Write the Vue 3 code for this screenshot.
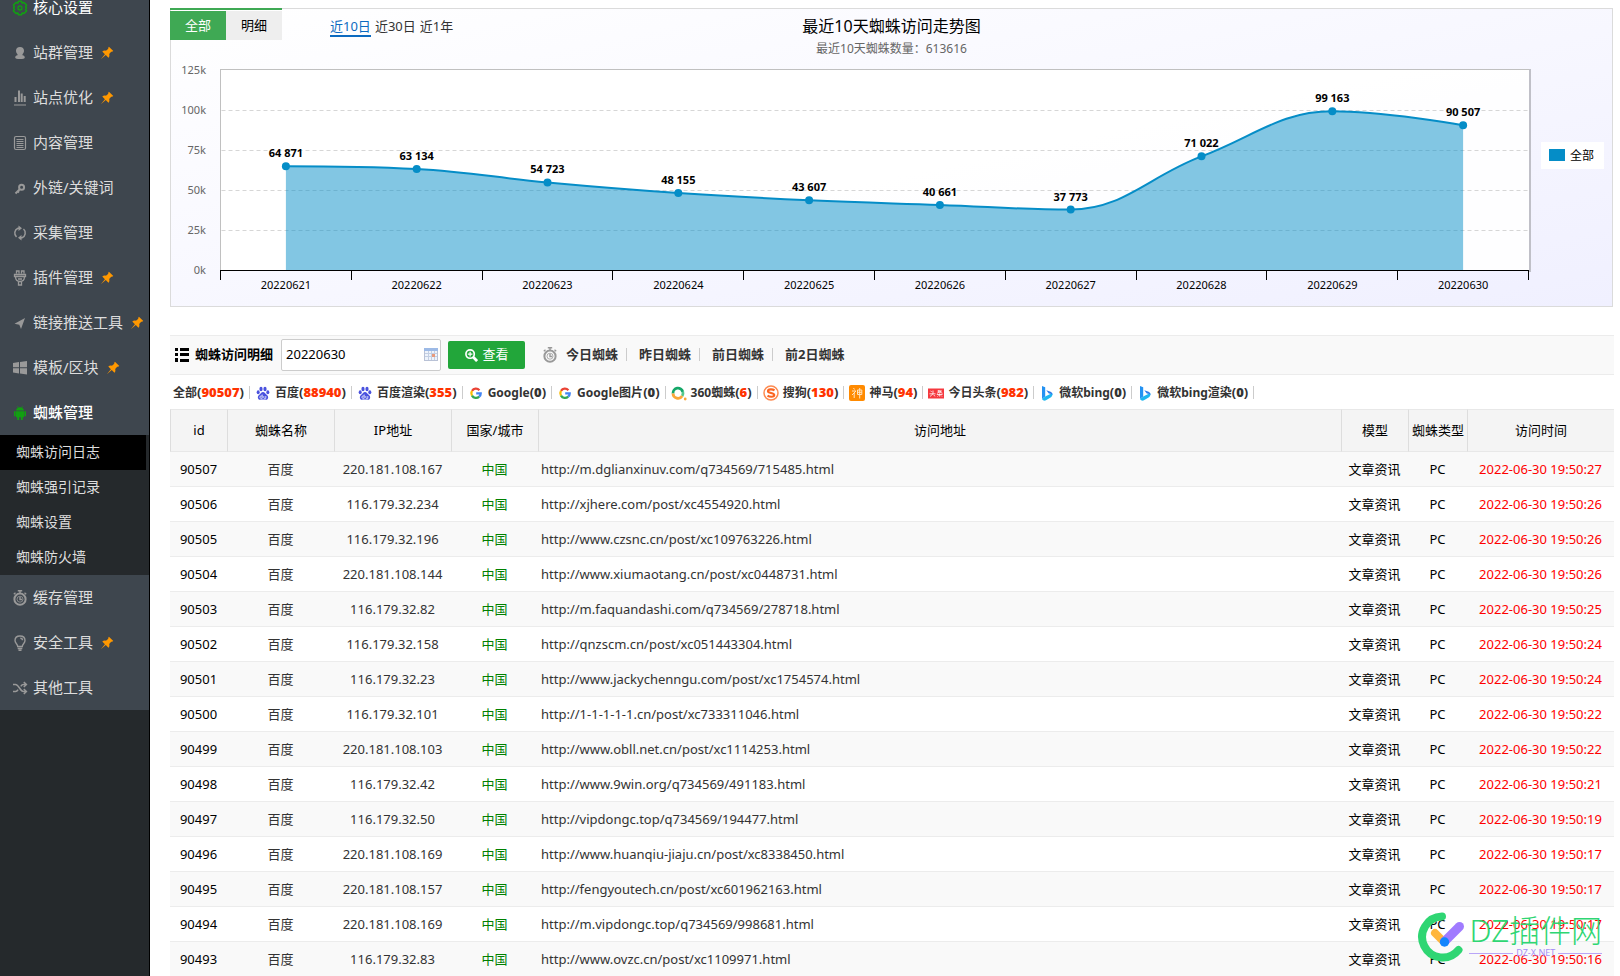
<script setup>
import { ref, computed, onMounted, onBeforeUnmount } from 'vue'

const menu = [
  { icon: 'gear', label: '核心设置', on: true },
  { icon: 'user', label: '站群管理', pin: true },
  { icon: 'bars', label: '站点优化', pin: true },
  { icon: 'doc', label: '内容管理' },
  { icon: 'key', label: '外链/关键词' },
  { icon: 'cycle', label: '采集管理' },
  { icon: 'plug', label: '插件管理', pin: true },
  { icon: 'send', label: '链接推送工具', pin: true },
  { icon: 'win', label: '模板/区块', pin: true },
  {
    icon: 'android', label: '蜘蛛管理', on: true, bold: true,
    children: ['蜘蛛访问日志', '蜘蛛强引记录', '蜘蛛设置', '蜘蛛防火墙']
  },
  { icon: 'clock', label: '缓存管理' },
  { icon: 'bulb', label: '安全工具', pin: true },
  { icon: 'shuffle', label: '其他工具' }
]

const days = ['今日蜘蛛', '昨日蜘蛛', '前日蜘蛛', '前2日蜘蛛']
const date = ref('20220630')

const filters = [
  { label: '全部', n: '90507', hot: true },
  { icon: 'baidu', label: '百度', n: '88940', hot: true },
  { icon: 'baidu', label: '百度渲染', n: '355', hot: true },
  { icon: 'google', label: 'Google', n: '0' },
  { icon: 'google', label: 'Google图片', n: '0' },
  { icon: 'so', label: '360蜘蛛', n: '6', hot: true },
  { icon: 'sogou', label: '搜狗', n: '130', hot: true },
  { icon: 'shenma', label: '神马', n: '94', hot: true },
  { icon: 'toutiao', label: '今日头条', n: '982', hot: true },
  { icon: 'bing', label: '微软bing', n: '0' },
  { icon: 'bing', label: '微软bing渲染', n: '0' }
]

const heads = [
  ['id', 'id'], ['name', '蜘蛛名称'], ['ip', 'IP地址'], ['area', '国家/城市'],
  ['url', '访问地址'], ['model', '模型'], ['type', '蜘蛛类型'], ['time', '访问时间']
]

const rows = [
  ['90507', '220.181.108.167', 'http://m.dglianxinuv.com/q734569/715485.html', '27'],
  ['90506', '116.179.32.234', 'http://xjhere.com/post/xc4554920.html', '26'],
  ['90505', '116.179.32.196', 'http://www.czsnc.cn/post/xc109763226.html', '26'],
  ['90504', '220.181.108.144', 'http://www.xiumaotang.cn/post/xc0448731.html', '26'],
  ['90503', '116.179.32.82', 'http://m.faquandashi.com/q734569/278718.html', '25'],
  ['90502', '116.179.32.158', 'http://qnzscm.cn/post/xc051443304.html', '24'],
  ['90501', '116.179.32.23', 'http://www.jackychenngu.com/post/xc1754574.html', '24'],
  ['90500', '116.179.32.101', 'http://1-1-1-1-1.cn/post/xc733311046.html', '22'],
  ['90499', '220.181.108.103', 'http://www.obll.net.cn/post/xc1114253.html', '22'],
  ['90498', '116.179.32.42', 'http://www.9win.org/q734569/491183.html', '21'],
  ['90497', '116.179.32.50', 'http://vipdongc.top/q734569/194477.html', '19'],
  ['90496', '220.181.108.169', 'http://www.huanqiu-jiaju.cn/post/xc8338450.html', '17'],
  ['90495', '220.181.108.157', 'http://fengyoutech.cn/post/xc601962163.html', '17'],
  ['90494', '220.181.108.169', 'http://m.vipdongc.top/q734569/998681.html', '17'],
  ['90493', '116.179.32.83', 'http://www.ovzc.cn/post/xc1109971.html', '16']
]

/* chart */
const values = [64871, 63134, 54723, 48155, 43607, 40661, 37773, 71022, 99163, 90507]
const chartBox = ref(null)
const W = ref(1441)
const LEFT = 49.5
const BASE = 261
const TOP = 61
let observer
onMounted(() => {
  observer = new ResizeObserver(() => { W.value = chartBox.value.clientWidth })
  observer.observe(chartBox.value)
})
onBeforeUnmount(() => observer.disconnect())

const right = computed(() => W.value - 83.5)
const step = computed(() => (right.value - LEFT) / values.length)
const points = computed(() => values.map((v, i) => ({
  x: LEFT + step.value * (i + 0.5),
  y: BASE - (v / 125000) * (BASE - TOP),
  text: `${Math.floor(v / 1000)} ${String(v % 1000).padStart(3, '0')}`,
  day: String(20220621 + i)
})))
const ticks = computed(() => Array.from({ length: 11 }, (_, i) => Math.floor(LEFT + step.value * i) + 0.5))
const grid = [0, 25, 50, 75, 100, 125].map(k => ({ k, y: BASE - k * 1.6 + 0.5 }))

const line = computed(() => {
  const p = points.value
  let d = `M${p[0].x} ${p[0].y}`
  let prev = [p[0].x, p[0].y]
  for (let i = 1; i < p.length; i++) {
    const c = p[i]
    const a = p[i - 1]
    const b = p[i + 1]
    let lx = c.x
    let ly = c.y
    let rx = c.x
    let ry = c.y
    if (b) {
      lx = (1.5 * c.x + a.x) / 2.5
      ly = (1.5 * c.y + a.y) / 2.5
      rx = (1.5 * c.x + b.x) / 2.5
      ry = (1.5 * c.y + b.y) / 2.5
      const k = ((ry - ly) * (rx - c.x)) / (rx - lx) + c.y - ry
      ly += k
      ry += k
      if (ly > a.y && ly > c.y) { ly = Math.max(a.y, c.y); ry = 2 * c.y - ly }
      else if (ly < a.y && ly < c.y) { ly = Math.min(a.y, c.y); ry = 2 * c.y - ly }
      if (ry > b.y && ry > c.y) { ry = Math.max(b.y, c.y); ly = 2 * c.y - ry }
      else if (ry < b.y && ry < c.y) { ry = Math.min(b.y, c.y); ly = 2 * c.y - ry }
    }
    d += ` C${prev[0]} ${prev[1]} ${lx} ${ly} ${c.x} ${c.y}`
    prev = [rx, ry]
  }
  return d
})
const area = computed(() => {
  const p = points.value
  return `${line.value} L${p[p.length - 1].x} ${BASE} L${p[0].x} ${BASE} Z`
})
</script>

<template>
  <div class="app">
    <svg class="defs" aria-hidden="true">
      <symbol id="i-gear" viewBox="0 0 16 16">
        <path fill="none" stroke="currentColor" stroke-width="1.5" stroke-linejoin="round" d="M6.400 1.200h3.200l.5 1.900 1.900-.5 2.600 2.400-1 1.700.9 1.300-.9 1.300 1 1.700-2.600 2.400-1.900-.5-.5 1.900H6.400l-.5-1.900-1.900.5L1.400 11l1-1.700L1.500 8l.9-1.300-1-1.700L4 2.600l1.900.5z" />
        <circle cx="8" cy="8" r="2" fill="none" stroke="currentColor" stroke-width="1.300" />
      </symbol>
      <symbol id="i-user" viewBox="0 0 16 16">
        <path fill="currentColor" d="M8 2c2.600 0 4 1.500 4 3.800 0 1.500-.7 2.700-1.500 3.500v.9c1.500.4 2.300 1 2.300 2.200 0 1-2 1.600-4.800 1.600s-4.800-.6-4.800-1.600c0-1.200.8-1.800 2.300-2.200v-.9C4.700 8.500 4 7.300 4 5.800 4 3.500 5.400 2 8 2z" />
      </symbol>
      <symbol id="i-bars" viewBox="0 0 16 16">
        <path fill="currentColor" d="M2 14.500h12v1H2zM2.500 7h2v5h-2zM6 .5h2V12H6zM8.700 3.500h2V12h-2zM11.700 6h2v6h-2z" />
      </symbol>
      <symbol id="i-doc" viewBox="0 0 16 16">
        <rect x="2.500" y="1.500" width="11" height="13" rx="1.500" fill="none" stroke="currentColor" stroke-width="1.200" />
        <path stroke="currentColor" d="M4.500 4.500h7M4.500 6.500h7M4.500 8.500h7M4.500 10.500h7M4.500 12.500h7" />
      </symbol>
      <symbol id="i-key" viewBox="0 0 16 16">
        <path fill="none" stroke="currentColor" stroke-width="2" d="M8 9L3.500 13.500M5.500 11l1.500 1.500" />
        <circle cx="9.600" cy="7.300" r="2.500" fill="none" stroke="currentColor" stroke-width="2" />
      </symbol>
      <symbol id="i-cycle" viewBox="0 0 16 16">
        <path fill="none" stroke="currentColor" stroke-width="1.500" d="M4.500 12A5.200 5.200 0 0 1 6 3.300h1M11.500 4A5.200 5.200 0 0 1 10 12.700H9" />
        <path fill="currentColor" d="M6.500.5l3.500 2.800L6.500 6zM9.500 10v5.500L6 12.700z" />
      </symbol>
      <symbol id="i-plug" viewBox="0 0 16 16">
        <path fill="none" stroke="currentColor" stroke-width="1.300" d="M4.500 3.500V1H7v2.500M9.500 3.500V1H12v2.500M2.500 4.500h11v2h-11zM3.500 6.500c0 3 1.700 5 4.500 5s4.500-2 4.500-5M6.500 11.500V15h3v-3.500M6 9h4" />
      </symbol>
      <symbol id="i-send" viewBox="0 0 16 16">
        <path fill="currentColor" d="M13 3L2.500 8.800l4.800 1 1.700 4.200z" />
      </symbol>
      <symbol id="i-win" viewBox="0 0 16 16">
        <path fill="currentColor" d="M1 3l6-.9v5.200H1zM8 2l7-1v6.300H8zM1 8.300h6v5.100l-6-.9zM8 8.300h7v6.300l-7-1z" />
      </symbol>
      <symbol id="i-android" viewBox="0 0 16 16">
        <path fill="currentColor" d="M4 5.600C4.200 4 5 3.200 6 2.700L5 1.200l.5-.2 1 1.400a5 5 0 0 1 3 0l1-1.400.5.2-1 1.500c1 .5 1.800 1.300 2 2.900zM4 6.200h8v6H10.700V15H8.900v-2.800H7.100V15H5.300v-2.800H4z" />
        <rect x="2" y="6" width="1.600" height="5.500" rx=".8" fill="currentColor" />
        <rect x="12.400" y="6" width="1.600" height="5.500" rx=".8" fill="currentColor" />
      </symbol>
      <symbol id="i-clock" viewBox="0 0 16 16">
        <circle cx="8" cy="9.200" r="5.600" fill="none" stroke="currentColor" stroke-width="2" />
        <circle cx="8" cy="9.200" r="3" fill="none" stroke="currentColor" stroke-width=".8" />
        <path fill="none" stroke="currentColor" stroke-width="1.400" d="M5.800.8h4.400M8 1v2.500M1.800 4.200l1.700-1.400M14.200 4.200l-1.700-1.400M8 7v2.500h2.200" />
      </symbol>
      <symbol id="i-bulb" viewBox="0 0 16 16">
        <path fill="none" stroke="currentColor" stroke-width="1.400" d="M5.700 11.500C5.700 9 3 8.500 3 5.500 3 2.800 5 1 8 1s5 1.800 5 4.500c0 3-2.700 3.500-2.700 6zM5.700 13.500h4.600M6.500 15.200h3M8.300 3.300c1.400 0 2.200.8 2.200 2" />
      </symbol>
      <symbol id="i-shuffle" viewBox="0 0 16 16">
        <path fill="none" stroke="currentColor" stroke-width="1.500" d="M1 4.500h2.500c3.500 0 4.500 7 8 7H14M1 11.500h2.500c1.200 0 2-.8 2.600-1.800M8.800 6.300c.6-1 1.500-1.800 2.700-1.800H14M11.800 2l2.600 2.500L11.800 7M11.800 9l2.600 2.500-2.600 2.500" />
      </symbol>
      <symbol id="i-pin" viewBox="0 0 16 16">
        <path fill="currentColor" d="M10.200.8l5 5-1.500.9-.9-.2-2.300 2.600c.5 1.600.3 3-.8 4.300L6.600 10.300 1 15l4.600-5.700-3-3C4 5.200 5.300 5 6.800 5.500l2.700-2.300-.2-.9z" />
      </symbol>
      <symbol id="i-baidu" viewBox="0 0 16 16">
        <g fill="#4a52de">
          <ellipse cx="6" cy="4" rx="1.600" ry="2.200" />
          <ellipse cx="10" cy="4" rx="1.600" ry="2.200" />
          <ellipse cx="3.200" cy="7.300" rx="1.500" ry="2" />
          <ellipse cx="12.800" cy="7.300" rx="1.500" ry="2" />
          <path d="M8 7c1.800 0 2.200 1.500 3.400 2.500 1.200 1.100 2 2 1.700 3.400-.4 1.700-1.900 2-3.200 1.700-1.200-.3-2.600-.3-3.800 0-1.300.3-2.800 0-3.200-1.700-.3-1.400.5-2.300 1.700-3.400C5.800 8.500 6.200 7 8 7z" />
        </g>
        <path fill="none" stroke="#dfe1fa" stroke-width=".9" d="M7.200 9.500v3.800H6a1.100 1.100 0 0 1 0-2.300h1.200M8.800 11v1.800c0 .4.300.6.7.6h1.300V11" />
      </symbol>
      <symbol id="i-google" viewBox="0 0 16 16">
        <g fill="none" stroke-width="2.300">
          <path stroke="#ea4335" d="M4 5.800A4.600 4.600 0 0 1 11.400 5.200" />
          <path stroke="#fbbc05" d="M4 10.600A4.600 4.600 0 0 1 4 5.800" />
          <path stroke="#34a853" d="M11.200 11.600A4.600 4.600 0 0 1 4 10.600" />
          <path stroke="#4285f4" d="M8.200 8.400h4.500c0 1.300-.5 2.400-1.500 3.200" />
        </g>
      </symbol>
      <symbol id="i-so" viewBox="0 0 16 16">
        <g fill="none" stroke-width="2.800">
          <path stroke="#14a768" d="M2 8.500A5 5 0 0 1 11.800 6.800" />
          <path stroke="#55c98f" d="M11.800 6.800a5 5 0 0 1-.6 4.200" />
          <path stroke="#f9a83a" d="M11.200 11A5 5 0 0 1 2 8.500" />
        </g>
        <circle cx="14.200" cy="14" r="1.400" fill="#f9a83a" />
      </symbol>
      <symbol id="i-sogou" viewBox="0 0 16 16">
        <circle cx="8" cy="8" r="7" fill="#fff" stroke="#fd8a50" stroke-width="1.500" />
        <path fill="none" stroke="#fb6522" stroke-width="2.200" d="M11.500 5.300C9.500 4 5 4 5 6.200S11.200 7.600 11.200 10 6.500 12 4.500 10.600" />
      </symbol>
      <symbol id="i-shenma" viewBox="0 0 16 16">
        <rect width="16" height="16" rx="2" fill="#ff8a00" />
        <path fill="none" stroke="#ffe3bf" stroke-width="1" d="M4.500 3l1 1.500M3 6h4L3 10M5.200 8v5M8.500 5h4.300v4.500H8.500zM8.500 7.300h4.300M10.700 3v10.500" />
      </symbol>
      <symbol id="i-toutiao" viewBox="0 0 16 16">
        <rect y="3.500" width="16" height="10" fill="#f5393f" />
        <path stroke="#fff" stroke-width=".8" fill="none" d="M1.500 8.800h6M5 5.500v3.300L2 11.500M2.500 6l1.200.6M5.500 10l1.700 1.200M10 5.500l3.500.5L9 8.300M9.500 6l5 2.300M8.800 9.500h5.700M11.700 8.300v3.300M9.500 11.500l1-1M14 11.500l-1-1" />
      </symbol>
      <symbol id="i-bing" viewBox="0 0 16 16">
        <path fill="#2492f2" d="M3 1l3.200 1.200v9.300L3 14z" />
        <path fill="#1fb6f0" d="M3 14l3.200-2.500 7-3.500c.8 2.200-.3 3.800-2 4.700L6.500 15.500C5 16 3.800 15.200 3 14z" />
        <path fill="#2a78ea" d="M7.300 5.200l4.300 1.500c1.200.5 1.900 1.700 1.900 3.500-.5-1-1.300-1.300-3.700-1.700z" />
      </symbol>
    </svg>

    <aside class="side">
      <nav class="nav">
        <template v-for="m in menu" :key="m.label">
          <a href="#" class="item" :class="{ on: m.on, bold: m.bold }">
            <svg class="ico"><use :href="'#i-' + m.icon" /></svg>
            <span>{{ m.label }}</span>
            <svg v-if="m.pin" class="pin"><use href="#i-pin" /></svg>
          </a>
          <div v-if="m.children" class="sub">
            <a v-for="(c, i) in m.children" :key="c" href="#" :class="{ cur: i === 0 }">{{ c }}</a>
          </div>
        </template>
      </nav>
    </aside>

    <main class="main">
      <section ref="chartBox" class="chart">
        <svg class="plot" :width="W" height="297" role="img" aria-label="最近10天蜘蛛访问走势图">
          <defs>
            <linearGradient id="bg" x1="0" y1="0" x2="1" y2="1">
              <stop offset="0" stop-color="#ffffff" />
              <stop offset="1" stop-color="#f0f0ff" />
            </linearGradient>
          </defs>
          <rect :width="W" height="297" fill="url(#bg)" />
          <rect :x="LEFT" y="60.5" :width="right - LEFT + 1" height="201" class="frame" />
          <line :x1="right + 1.5" :x2="right + 1.5" y1="60" y2="263" class="shade" />
          <line v-for="g in grid.slice(1, 5)" :key="g.k" :x1="LEFT + 1" :x2="right" :y1="g.y" :y2="g.y" class="grid" />
          <path :d="area" class="area" />
          <path :d="line" class="line" />
          <line :x1="LEFT" :x2="right" y1="261.5" y2="261.5" class="axis" />
          <line v-for="t in ticks" :key="t" :x1="t" :x2="t" y1="261" y2="271" class="axis" />
          <text v-for="g in grid" :key="g.k" x="35" :y="g.y + 3" class="ylab">{{ g.k }}k</text>
          <g v-for="p in points" :key="p.day">
            <circle :cx="p.x" :cy="p.y" r="4" class="dot" />
            <text :x="p.x" :y="p.y - 9" class="val">{{ p.text }}</text>
            <text :x="p.x" y="280" class="xlab">{{ p.day }}</text>
          </g>
          <text :x="W / 2" y="23" class="title">最近10天蜘蛛访问走势图</text>
          <text :x="W / 2" y="44" class="subtitle">最近10天蜘蛛数量：613616</text>
          <rect :x="W - 71" y="133" width="63" height="27" fill="#fff" />
          <rect :x="W - 63" y="140" width="16" height="12" class="dot" />
          <text :x="W - 42" y="151" class="legend">全部</text>
        </svg>
        <div class="over">
          <div class="tabs">
            <button type="button" class="tab active">全部</button>
            <button type="button" class="tab">明细</button>
          </div>
          <div class="range">
            <a href="#" class="cur">近10日</a>
            <a href="#">近30日</a>
            <a href="#">近1年</a>
          </div>
        </div>
      </section>

      <form class="bar" @submit.prevent>
        <svg class="list" viewBox="0 0 14 14">
          <path d="M0 0h3v3H0zM0 5h3v3H0zM0 10h3v4H0zM5 0h9v3H5zM5 5h9v3H5zM5 11h9v3H5z" />
        </svg>
        <label for="day">蜘蛛访问明细</label>
        <div class="field">
          <input id="day" v-model="date" type="text">
          <svg class="cal" viewBox="0 0 14 13">
            <rect x=".5" y=".5" width="13" height="12" fill="#eef3fb" stroke="#b9c2d6" />
            <path fill="#9dbae6" d="M0 0h14v3H0z" />
            <path stroke="#c3cfe3" d="M1 5.500h12M1 8.500h12M4.500 3v9M7.500 3v9M10.500 3v9" />
            <path fill="#e89a7c" d="M8 6h3v3H8z" />
          </svg>
        </div>
        <button type="submit" class="go">
          <svg viewBox="0 0 14 14">
            <circle cx="5.500" cy="5.500" r="4.500" fill="none" stroke="#fff" stroke-width="1.800" />
            <path stroke="#fff" stroke-width="1.300" d="M3 5.500h5M5.500 3v5" />
            <path stroke="#fff" stroke-width="3" d="M9 9l4 4" />
          </svg>
          <span>查看</span>
        </button>
        <svg class="watch"><use href="#i-clock" /></svg>
        <div class="days">
          <a v-for="d in days" :key="d" href="#">{{ d }}</a>
        </div>
      </form>

      <div class="filters">
        <a v-for="f in filters" :key="f.label" href="#">
          <svg v-if="f.icon"><use :href="'#i-' + f.icon" /></svg>
          <span>{{ f.label }}<span class="count">(<b :class="{ hot: f.hot }">{{ f.n }}</b>)</span></span>
        </a>
      </div>

      <table>
        <thead>
          <tr>
            <th v-for="h in heads" :key="h[0]" :class="'c-' + h[0]" scope="col">{{ h[1] }}</th>
          </tr>
        </thead>
        <tbody>
          <tr v-for="r in rows" :key="r[0]">
            <td class="dark">{{ r[0] }}</td>
            <td>百度</td>
            <td>{{ r[1] }}</td>
            <td class="green">中国</td>
            <td class="link">{{ r[2] }}</td>
            <td class="dark">文章资讯</td>
            <td class="dark">PC</td>
            <td class="red">2022-06-30 19:50:{{ r[3] }}</td>
          </tr>
        </tbody>
      </table>
    </main>

    <div class="mark">
      <svg viewBox="0 0 48 50">
        <path fill="none" stroke="#2fd673" stroke-width="8" stroke-linecap="round" d="M25 4.500A20.500 20.500 0 1 0 41.500 38" />
        <path stroke="#ffb63d" stroke-width="8" stroke-linecap="round" d="M18 21l8 8" />
        <path stroke="#a07bff" stroke-width="9" stroke-linecap="round" d="M27.500 29.500l15-15" />
        <circle cx="27.500" cy="30" r="4.700" fill="#1385fd" />
      </svg>
      <div class="words">
        <strong>DZ插件网</strong>
        <small>DZ-X.NET</small>
      </div>
    </div>
  </div>
</template>

<style>
body {
  margin: 0;
}
</style>

<style scoped>
.app {
  display: flex;
  height: 100vh;
  overflow: hidden;
  background: #fff;
  color: #333;
  font: 13px/20px "Noto Sans", "Noto Sans CJK SC", sans-serif;
}
.app * {
  box-sizing: border-box;
}
a {
  color: inherit;
  text-decoration: none;
}
.defs {
  position: absolute;
  width: 0;
  height: 0;
}

.side {
  flex: none;
  width: 150px;
  background: #25292c;
  border-right: 1px solid #000;
}
.nav {
  margin-top: -15px;
  background: #3e464e;
}
.item {
  display: flex;
  align-items: center;
  height: 45px;
  padding-left: 12px;
  color: #ddd;
  font-size: 15px;
  white-space: nowrap;
}
.item span {
  padding-bottom: 2px;
}
.ico {
  flex: none;
  width: 16px;
  height: 16px;
  margin-right: 5px;
  color: #999;
}
.pin {
  flex: none;
  width: 14px;
  height: 14px;
  margin-left: 7px;
  color: #ff9800;
}
.item.on {
  color: #fff;
}
.item.bold {
  font-weight: 500;
}
.item.on .ico {
  color: #11a011;
}
.sub {
  background: #25292c;
}
.sub a {
  display: block;
  height: 35px;
  margin-right: 3px;
  padding-left: 16px;
  color: #ddd;
  font-size: 14px;
  line-height: 34px;
}
.sub .cur {
  background: #000;
}

.main {
  flex: 1;
  min-width: 0;
  padding: 8px 6px 0 20px;
}
.chart {
  position: relative;
  height: 299px;
  margin-right: 1px;
  border: 1px solid #dbdbdb;
}
.plot {
  display: block;
}
.frame {
  fill: rgba(255, 255, 255, .9);
  stroke: #c0c0c0;
}
.shade {
  stroke: #c0c0c8;
  stroke-width: 2px;
}
.grid {
  stroke: #d6d6d6;
  stroke-dasharray: 4 3;
}
.area {
  fill: rgba(5, 141, 199, .5);
}
.line {
  fill: none;
  stroke: #058dc7;
  stroke-width: 2px;
}
.axis {
  stroke: #000;
}
.dot {
  fill: #058dc7;
}
.ylab {
  fill: #666;
  font-size: 11px;
  text-anchor: end;
}
.xlab {
  fill: #000;
  font-size: 11px;
  text-anchor: middle;
}
.val {
  fill: #000;
  font-size: 11px;
  font-weight: 700;
  text-anchor: middle;
}
.title {
  fill: #000;
  font-size: 16px;
  text-anchor: middle;
}
.subtitle {
  fill: #666;
  font-size: 12px;
  text-anchor: middle;
}
.legend {
  fill: #000;
  font-size: 12px;
}
.over {
  position: absolute;
  top: -1px;
  left: -1px;
  display: flex;
  gap: 48px;
}
.tabs {
  display: flex;
  padding-top: 1px;
  border-top: 2px solid #3fa954;
}
.tab {
  width: 56px;
  height: 29px;
  padding: 0 0 1px;
  border: 0;
  background: #eee;
  color: #000;
  font: inherit;
}
.tab.active {
  background: #3fa954;
  color: #fff;
}
.range {
  display: flex;
  gap: 4px;
  align-self: flex-start;
  padding-top: 9px;
}
.range a {
  line-height: 18px;
}
.range .cur {
  border-bottom: 2px solid #0c6ac0;
  color: #0c6ac0;
}

.bar {
  display: flex;
  align-items: center;
  height: 40px;
  margin-top: 28px;
  padding-left: 5px;
  border: solid #ececec;
  border-width: 1px 0;
  background: #f9f9f9;
  font-weight: 700;
  white-space: nowrap;
}
.list {
  width: 14px;
  height: 14px;
  margin-right: 6px;
  fill: #000;
}
.bar label,
.days,
.go span {
  padding-bottom: 2px;
}
.bar label {
  color: #000;
}
.field {
  position: relative;
  width: 160px;
  margin: 0 7px 0 8px;
}
.field input {
  display: block;
  width: 100%;
  height: 32px;
  padding: 0 22px 2px 4px;
  border: 1px solid #ccc;
  border-radius: 2px;
  background: #fff;
  color: #000;
  font: 400 13px "Noto Sans", "Noto Sans CJK SC", sans-serif;
}
.cal {
  position: absolute;
  top: 9px;
  right: 3px;
  width: 14px;
  height: 13px;
}
.go {
  display: flex;
  align-items: center;
  justify-content: center;
  gap: 5px;
  width: 77px;
  height: 28px;
  margin-right: 17px;
  padding: 0;
  border: 0;
  border-radius: 2px;
  background: #22a63a;
  color: #fff;
  font: inherit;
  font-weight: 400;
}
.go svg {
  width: 13px;
  height: 13px;
}
.watch {
  width: 16px;
  height: 16px;
  margin-right: 8px;
  color: #999;
}
.days {
  display: flex;
}
.days a + a::before {
  content: "";
  display: inline-block;
  width: 1px;
  height: 13px;
  margin: 0 12px 0 8px;
  background: #ccc;
  vertical-align: -2px;
}

.filters {
  display: flex;
  align-items: center;
  height: 34px;
  padding: 1px 0 0 3px;
  font-size: 12px;
  font-weight: 700;
  white-space: nowrap;
}
.filters a {
  display: flex;
  align-items: center;
}
.filters a::after {
  content: "";
  width: 1px;
  height: 13px;
  margin: 0 5px;
  background: #ccc;
}
.filters svg {
  width: 16px;
  height: 16px;
  margin-right: 4px;
}
.count {
  font-size: 13px;
}
.hot {
  color: #f30;
}

table {
  width: 100%;
  table-layout: fixed;
  border-collapse: separate;
  border-spacing: 0;
  white-space: nowrap;
}
th {
  height: 43px;
  padding: 0 0 2px;
  border: solid #e8e8e8;
  border-width: 1px 0;
  border-left: 1px solid #ddd;
  background: #f4f4f4;
  color: #000;
  font-weight: 400;
}
td {
  height: 35px;
  padding: 0 0 1px;
  border-bottom: 1px solid #ececec;
  text-align: center;
}
tbody tr:nth-child(odd) {
  background: #f9f9f9;
}
.c-id { width: 57px; }
.c-name { width: 107px; }
.c-ip { width: 117px; }
.c-area { width: 87px; }
.c-model { width: 67px; }
.c-type { width: 59px; }
.c-time { width: 147px; }
.dark { color: #000; }
.green { color: #008000; }
.red { color: #f00; }
.link {
  padding-left: 3px;
  text-align: left;
}

.mark {
  position: absolute;
  right: 18px;
  bottom: 14px;
  display: flex;
  gap: 4px;
}
.mark svg {
  width: 48px;
  height: 50px;
}
.words {
  display: flex;
  flex-direction: column;
}
.words strong {
  color: #2fd673;
  font-size: 31px;
  font-weight: 300;
  line-height: 36px;
}
.words small {
  display: flex;
  align-items: center;
  gap: 3px;
  color: #a58cf5;
  font-size: 9px;
  line-height: 10px;
}
.words small::before,
.words small::after {
  content: "";
  flex: 1;
  height: 1px;
  background: #b9a5f7;
}
</style>
